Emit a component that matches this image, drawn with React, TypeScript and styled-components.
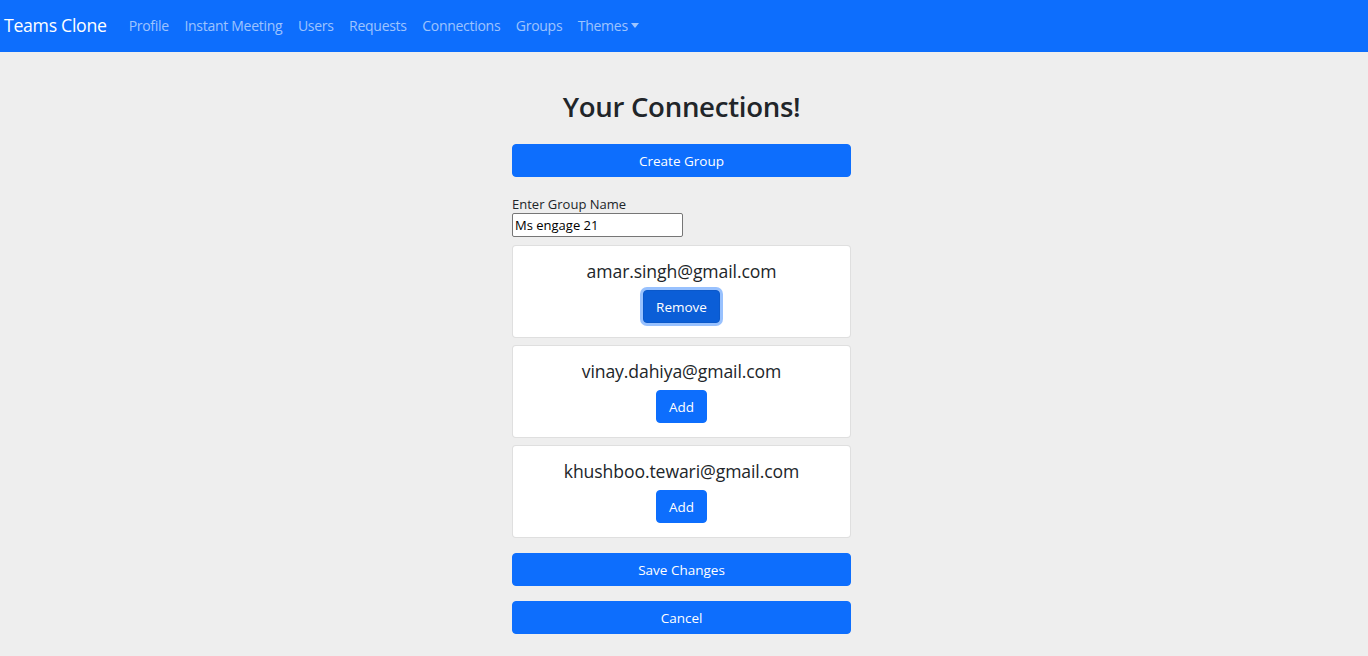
import React from "react";
import styled, { createGlobalStyle } from "styled-components";

const Global = createGlobalStyle`
  html, body { margin: 0; padding: 0; }
  body {
    background: #eeeeee;
    font-family: "Open Sans", "Noto Sans", sans-serif;
    color: #212529;
  }
`;

const Navbar = styled.nav`
  height: 52px;
  background: #0d6efd;
  display: flex;
  align-items: center;
  padding: 0 4px 2px;
  box-sizing: border-box;
`;

const Brand = styled.a`
  color: #fff;
  font-size: 17.7px;
  margin-right: 22px;
  letter-spacing: -0.3px;
`;

const NavList = styled.ul`
  list-style: none;
  display: flex;
  margin: 0;
  padding: 0;
  gap: 15.5px;
`;

const NavItem = styled.li`
  color: rgba(255, 255, 255, 0.6);
  font-size: 14px;
  letter-spacing: -0.28px;
  display: flex;
  align-items: center;
`;

const Caret = styled.span`
  display: inline-block;
  margin-left: 3px;
  border-top: 5px solid rgba(255, 255, 255, 0.6);
  border-left: 4px solid transparent;
  border-right: 4px solid transparent;
`;

const Main = styled.main`
  display: flex;
  justify-content: center;
  padding-right: 5px;
`;

const Column = styled.div`
  width: 339px;
  display: flex;
  flex-direction: column;
`;

const Title = styled.h2`
  margin: 37px 0 21px;
  text-align: center;
  font-size: 27.6px;
  font-weight: 600;
  line-height: 34px;
  letter-spacing: -0.3px;
`;

const Button = styled.button<{ $full?: boolean; $active?: boolean }>`
  background: ${(p) => (p.$active ? "#0b5ed7" : "#0d6efd")};
  color: #fff;
  border: 1px solid ${(p) => (p.$active ? "#0a58ca" : "#0d6efd")};
  border-radius: 4px;
  font-family: inherit;
  font-size: 13.5px;
  height: 33px;
  padding: 0 12px;
  width: ${(p) => (p.$full ? "100%" : "auto")};
  box-shadow: ${(p) => (p.$active ? "0 0 0 3px rgba(49,132,253,0.5)" : "none")};
  cursor: pointer;
`;

const Label = styled.label`
  display: block;
  margin-top: 19px;
  font-size: 13px;
  line-height: 17px;
`;

const Input = styled.input`
  width: 171px;
  height: 24px;
  box-sizing: border-box;
  border: 1px solid #767676;
  border-radius: 2px;
  padding: 1px 2px;
  font-family: inherit;
  font-size: 13px;
  color: #000;
`;

const CardList = styled.div`
  display: flex;
  flex-direction: column;
  gap: 7px;
  margin-top: 8px;
`;

const Card = styled.div`
  background: #fff;
  border: 1px solid rgba(0, 0, 0, 0.125);
  border-radius: 4px;
  height: 93px;
  box-sizing: border-box;
  display: flex;
  flex-direction: column;
  align-items: center;
  padding-top: 13px;
`;

const Email = styled.div`
  font-size: 17.6px;
  line-height: 24px;
  margin-bottom: 7px;
  letter-spacing: -0.1px;
`;

const Footer = styled.div`
  display: flex;
  flex-direction: column;
  gap: 15px;
  margin-top: 15px;
`;

const connections = [
  { email: "amar.singh@gmail.com", added: true },
  { email: "vinay.dahiya@gmail.com", added: false },
  { email: "khushboo.tewari@gmail.com", added: false },
];

export default function App() {
  return (
    <>
      <Global />
      <Navbar>
        <Brand>Teams Clone</Brand>
        <NavList>
          <NavItem>Profile</NavItem>
          <NavItem>Instant Meeting</NavItem>
          <NavItem>Users</NavItem>
          <NavItem>Requests</NavItem>
          <NavItem>Connections</NavItem>
          <NavItem>Groups</NavItem>
          <NavItem>
            Themes
            <Caret />
          </NavItem>
        </NavList>
      </Navbar>
      <Main>
        <Column>
          <Title>Your Connections!</Title>
          <Button $full>Create Group</Button>
          <Label>Enter Group Name</Label>
          <Input defaultValue="Ms engage 21" />
          <CardList>
            {connections.map((c) => (
              <Card key={c.email}>
                <Email>{c.email}</Email>
                <Button $active={c.added}>{c.added ? "Remove" : "Add"}</Button>
              </Card>
            ))}
          </CardList>
          <Footer>
            <Button $full>Save Changes</Button>
            <Button $full>Cancel</Button>
          </Footer>
        </Column>
      </Main>
    </>
  );
}
